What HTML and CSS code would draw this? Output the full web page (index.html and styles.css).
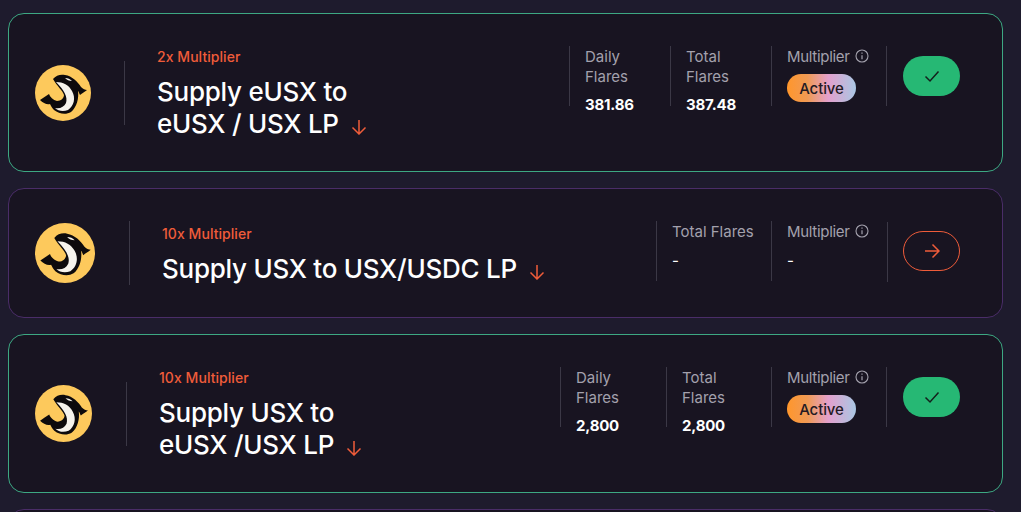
FILE: index.html
```html
<!DOCTYPE html>
<html lang="en">
<head>
<meta charset="utf-8">
<title>Flares</title>
<link rel="stylesheet" href="styles.css">
</head>
<body>
<svg class="defs" width="0" height="0" aria-hidden="true">
  <defs>
    <symbol id="whale" viewBox="0 0 56 56">
      <circle cx="28" cy="28" r="28" fill="#fdc95c"/>
      <path fill="#0d0a0c" d="M18 14C21 10 26 9 30 10C37 11 43 17 46 22C48 24 50 25 52 25C50 27 47 28 45 30C44 28 44 27 43 26C44 33 42 42 36 47C31 50 24 49 19 45C17 43 16 41 15 39C12 40 8 38 5 35C8 33 11 31 14 29C15 32 18 35 22 36C26 36 29 33 29 30C28 26 22 21 18 14Z"/>
      <path fill="#f6f3ec" d="M21 17C28 17 34 20 37 26C41 33 39 41 33 45C28 47 23 46 20 43C25 44 29 42 31 38C33 32 29 25 21 17Z"/>
      <path fill="#f6f3ec" d="M30 13C33 13 35 14 37 16C34 16 32 15 30 13Z"/>
    </symbol>
    <symbol id="down" viewBox="0 0 16 16"><path d="M8 1v14M1.500 8.500 8 15l6.500-6.500" fill="none" stroke="currentColor" stroke-width="1.500"/></symbol>
    <symbol id="info" viewBox="0 0 14 14"><circle cx="7" cy="7" r="6" fill="none" stroke="currentColor" stroke-width="1.100"/><path d="M7 6.200v4M7 3.600v1.200" fill="none" stroke="currentColor" stroke-width="1.200"/></symbol>
    <symbol id="check" viewBox="0 0 18 18"><path d="M2.500 9.500 7 14 15.500 4.500" fill="none" stroke="currentColor" stroke-width="1.500"/></symbol>
    <symbol id="right" viewBox="0 0 16 16"><path d="M1 8h14M8.500 1.500 15 8l-6.500 6.500" fill="none" stroke="currentColor" stroke-width="1.500"/></symbol>
  </defs>
</svg>
<main class="list">
  <article class="card card-done card-a">
    <svg class="logo"><use href="#whale"/></svg>
    <div class="rule"></div>
    <div class="heading">
      <div class="tag">2x Multiplier</div>
      <h2 class="title">Supply eUSX to<br>eUSX / USX LP<svg class="down"><use href="#down"/></svg></h2>
    </div>
    <div class="side">
      <div class="stat stat-a1"><div class="stat-label">Daily Flares</div><div class="stat-value">381.86</div></div>
      <div class="stat stat-a2"><div class="stat-label">Total Flares</div><div class="stat-value">387.48</div></div>
      <div class="stat stat-m"><div class="stat-label">Multiplier<svg class="info"><use href="#info"/></svg></div><div class="badge">Active</div></div>
      <button class="action action-done"><svg class="check"><use href="#check"/></svg></button>
    </div>
  </article>
  <article class="card card-open card-b">
    <svg class="logo"><use href="#whale"/></svg>
    <div class="rule"></div>
    <div class="heading">
      <div class="tag">10x Multiplier</div>
      <h2 class="title">Supply USX to USX/USDC LP<svg class="down"><use href="#down"/></svg></h2>
    </div>
    <div class="side">
      <div class="stat stat-b1"><div class="stat-label">Total Flares</div><div class="stat-value stat-dash">-</div></div>
      <div class="stat stat-m"><div class="stat-label">Multiplier<svg class="info"><use href="#info"/></svg></div><div class="stat-value stat-dash">-</div></div>
      <button class="action action-open"><svg class="right"><use href="#right"/></svg></button>
    </div>
  </article>
  <article class="card card-done card-c">
    <svg class="logo"><use href="#whale"/></svg>
    <div class="rule"></div>
    <div class="heading">
      <div class="tag">10x Multiplier</div>
      <h2 class="title">Supply USX to<br>eUSX /USX LP<svg class="down"><use href="#down"/></svg></h2>
    </div>
    <div class="side">
      <div class="stat stat-c1"><div class="stat-label">Daily Flares</div><div class="stat-value">2,800</div></div>
      <div class="stat stat-c2"><div class="stat-label">Total Flares</div><div class="stat-value">2,800</div></div>
      <div class="stat stat-m"><div class="stat-label">Multiplier<svg class="info"><use href="#info"/></svg></div><div class="badge">Active</div></div>
      <button class="action action-done"><svg class="check"><use href="#check"/></svg></button>
    </div>
  </article>
  <article class="card card-open card-d"></article>
</main>
</body>
</html>
```
FILE: styles.css
```css
* { box-sizing: border-box; }
html, body { height: 100%; }
body {
  margin: 0;
  overflow: hidden;
  background: #1e1b2d;
  font-family: Inter, "Liberation Sans", sans-serif;
  color: #fff;
}
.defs { display: block; height: 0; }
.list {
  display: flex;
  flex-direction: column;
  gap: 16px;
  width: 995px;
  margin: 13px 0 0 8px;
}
.card {
  display: flex;
  align-items: center;
  flex: none;
  padding: 32px 42px 32px 26px;
  background: #181421;
  border: 1px solid;
  border-radius: 16px;
}
.card-done { border-color: #3da883; }
.card-open { border-color: #4a2d68; }
.card-d { height: 130px; }
.logo { flex: none; width: 56px; height: 56px; }
.card-a .logo { margin-left: -0.5px; }
.card-b .logo { width: 60px; height: 60px; }
.card-c .logo { width: 57px; height: 57px; }
.rule {
  flex: none;
  width: 1px;
  height: 64px;
  margin: 0 32px 0 34px;
  background: #3b3846;
}
.card-a .rule { margin-left: 33.5px; }
.heading { flex: 1; min-width: 0; }
.tag {
  font-size: 14px;
  font-weight: 500;
  line-height: 21px;
  margin-bottom: 8px;
  color: #ef5c3a;
  letter-spacing: 0.05px;
}
.title {
  margin: 0 0 -1px;
  padding-top: 1px;
  font-size: 26px;
  font-weight: 500;
  line-height: 32px;
  letter-spacing: -0.25px;
}
.down { width: 16px; height: 16px; margin-left: 12px; color: #ef5c3a; vertical-align: -2px; }
.side {
  align-self: flex-start;
  display: flex;
  align-items: center;
  height: 60px;
}
.stat {
  height: 60px;
  padding: 1px 15px 0;
  border-left: 1px solid #3b3846;
}
.stat-a1, .stat-a2 { width: 101px; }
.stat-b1, .stat-m { width: 115px; white-space: nowrap; }
.stat-c1 { width: 106px; }
.stat-c2 { width: 105px; }
.stat-label {
  font-size: 15px;
  font-weight: 400;
  line-height: 20px;
  color: #a3a1ad;
}
.stat-m .stat-label { letter-spacing: -0.3px; }
.stat-value {
  margin-top: 8px;
  font-size: 15px;
  font-weight: 700;
  line-height: 20px;
  letter-spacing: -0.2px;
  color: #fff;
}
.stat-dash { margin-top: 9px; font-weight: 400; }
.info { width: 14px; height: 14px; margin-left: 5px; vertical-align: -1px; }
.badge {
  display: block;
  width: 69px;
  margin-top: 7px;
  height: 28px;
  line-height: 30px;
  text-align: center;
  font-size: 15px;
  font-weight: 500;
  letter-spacing: -0.1px;
  color: #241a24;
  border-radius: 14px;
  background: linear-gradient(90deg, #ff962b 0%, #f09a55 30%, #e3a0cd 60%, #a9c7e4 100%);
}
.action {
  position: relative;
  display: flex;
  align-items: center;
  justify-content: center;
  width: 57px;
  height: 40px;
  margin-left: 17px;
  padding: 0;
  border: 0;
  border-radius: 20px;
  background: none;
}
.action-done { background: #26b874; color: #14201c; }
.action-open { border: 1px solid #ef5c3a; color: #ef5c3a; }
.check { width: 18px; height: 18px; }
.right { width: 16px; height: 16px; }
.action::before {
  content: "";
  position: absolute;
  left: -17px;
  top: -10px;
  width: 1px;
  height: 60px;
  background: #3b3846;
}
```
